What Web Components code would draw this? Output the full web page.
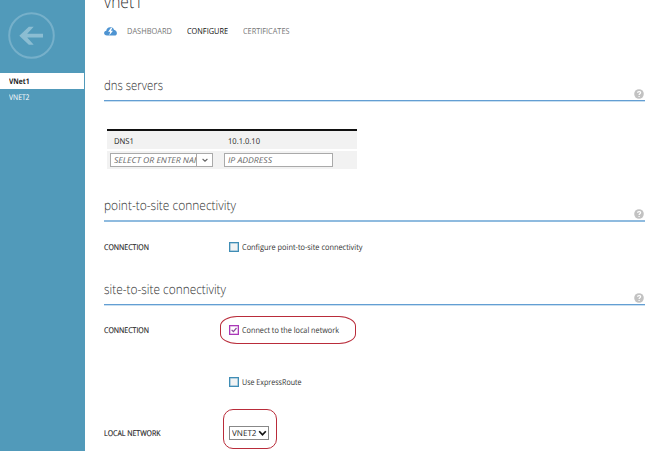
<!DOCTYPE html>
<html lang="en"><head><meta charset="utf-8"><title>vnet1</title>
<style>html,body{margin:0;height:451px;overflow:hidden;background:#fff;font-family:"Open Sans","Noto Sans",sans-serif}</style></head>
<body><portal-app></portal-app>
<script>
const define=(name,html,after)=>{
  const t=document.createElement('template');t.innerHTML=html;
  customElements.define(name,class extends HTMLElement{
    connectedCallback(){
      if(this.shadowRoot)return;
      this.attachShadow({mode:'open'}).append(t.content.cloneNode(true));
      if(after)after(this,this.shadowRoot);
    }
  });
};
// Text run condensed or widened to fill the width given in "w".
define('fit-text','<style>:host{display:inline-block;white-space:pre;flex:none;line-height:1.2;text-rendering:geometricPrecision}span{display:inline-block;transform-origin:0 50%}</style><span><slot></slot></span>',(el,r)=>{
  const s=r.querySelector('span'),w=+el.getAttribute('w');
  s.style.transform='scaleX('+w/s.getBoundingClientRect().width+')';
  el.style.width=w+'px';
});
define('back-button',`<style>:host{display:block;height:73px;padding:12px 0 0 8px;box-sizing:border-box}svg{display:block}</style>
<svg width="47" height="48" viewBox="0 0 47 48" fill="none"><circle cx="23.5" cy="23.5" r="22.3" stroke="#76b0ca" stroke-width="2"/><path d="M35 21.8V25.6H19.2L25.7 32.7H20.8L11.3 23.7L20.8 14.7H25.7L19.2 21.8Z" fill="#8bbdd2"/></svg>`);
define('side-item',`<style>:host{display:flex;align-items:center;box-sizing:border-box;height:16px;padding:3px 0 0 9px;font-size:7.8px;color:#fff}:host([active]){background:#fff;color:#222;font-weight:700;margin-right:1px}</style><slot></slot>`);
define('side-bar',`<style>:host{display:block;background:#519aba;height:451px}</style><back-button></back-button><side-item active><fit-text w="20.5">VNet1</fit-text></side-item><side-item><fit-text w="20.5">VNET2</fit-text></side-item>`);
define('cloud-icon',`<style>:host{display:block;width:13px;height:9px;flex:none}svg{display:block}</style>
<svg width="13" height="9" viewBox="0 0 13 9"><path d="M3 8.5C1.2 8.5.1 7.5.1 6.1.1 4.8 1 3.8 2.3 3.7 2.5 1.7 4 .3 6.1.3 8-.2 9.7 1 9.9 2.8 11.7 3.2 12.9 4.5 12.9 6.2 12.9 7.6 11.9 8.5 10.6 8.5Z" fill="#4e94d2"/><path d="M7 .7L4.1 4.7H6.2L5.2 8.4L9 3.7H6.9L8.4.7Z" fill="#fff"/></svg>`);
define('tab-bar',`<style>:host{display:flex;align-items:center;height:14px;font-size:8.4px;color:#777}fit-text{padding-top:3px}.on{color:#111}.a{margin-left:10px}.b{margin-left:15px}</style>
<cloud-icon></cloud-icon><fit-text class="a" w="45">DASHBOARD</fit-text><fit-text class="b on" w="41">CONFIGURE</fit-text><fit-text class="b" w="46.5">CERTIFICATES</fit-text>`);
define('help-icon',`<style>:host{display:block;width:10px;height:10px}svg{display:block}</style><svg width="10" height="10" viewBox="0 0 10 10"><circle cx="5" cy="5" r="4.8" fill="#c2c2c2"/><path d="M3.5 3.8C3.5 2.2 6.6 2.1 6.6 3.8 6.6 4.8 5.1 4.8 5.1 6" fill="none" stroke="#fff" stroke-width="1.2"/><path d="M4.5 6.9h1.2v1.2H4.5z" fill="#fff"/></svg>`);
define('section-head',`<style>:host{display:flex;justify-content:space-between;align-items:flex-start;box-sizing:border-box;width:541px;height:24px;padding-top:1px;border-bottom:1px solid #639ed3;color:#303030;font-size:13.3px;font-weight:300;box-shadow:0 1px 0 #c9dff0}:host([thick]){border-bottom:2px solid #8fbbdf;box-shadow:none;height:25px}help-icon{margin:11px 1px 0 0}</style><slot></slot><help-icon></help-icon>`);
define('dns-table',`<style>
:host{display:grid;grid-template-rows:18px 18px;row-gap:2px;width:250px;margin-left:3px;border-top:2px solid #111;font-size:8.1px;color:#222}
.row{display:grid;grid-template-columns:117px 133px;align-items:center;background:#f2f2f2}.c{padding:3px 0 0 7px}.d{padding:3px 0 0 4px}
.in{box-sizing:border-box;display:flex;align-items:center;height:14px;border:1px solid #aaa;background:#fff;font-style:italic;color:#666;padding-left:3px;overflow:hidden}.in fit-text{padding-top:1px}
.one{width:103px;margin-left:3px}.two{width:109px}.clip{width:82px;overflow:hidden;flex:none;display:flex}.arrow{border-left:1px solid #aaa;width:15px;height:12px;display:grid;place-items:center;flex:none}</style>
<div class="row"><fit-text class="c" w="20">DNS1</fit-text><fit-text class="d" w="32">10.1.0.10</fit-text></div>
<div class="row"><div class="in one"><span class="clip"><fit-text w="87">SELECT OR ENTER NAM</fit-text></span><span class="arrow"><svg width="6" height="5"><path d="M.6 1L3 3.2L5.4 1" fill="none" stroke="#666" stroke-width="1.1"/></svg></span></div><div class="in two"><fit-text w="44">IP ADDRESS</fit-text></div></div>`);
define('check-box',`<style>:host{display:flex;align-items:center;gap:3.2px;font-size:8.2px;color:#333}i{box-sizing:border-box;width:10px;height:10px;border:1px solid #3f8db5;box-shadow:inset 0 0 0 .5px #75aecb;background:#f1f3f4}svg{display:none}:host([checked]) i{border-color:#aa38b8;box-shadow:inset 0 0 0 .5px #cb82d2;background:#fff}:host([checked]) svg{display:block}</style><i><svg width="8" height="8"><path d="M1.6 3.8L3.4 5.7L6.5 2" fill="none" stroke="#8d4b9b" stroke-width="1.2"/></svg></i><slot></slot>`);
define('drop-down',`<style>:host{box-sizing:border-box;display:flex;align-items:center;justify-content:space-between;width:40px;height:14px;border:1px solid #888;padding:0 1px 0 2px;font-size:8.2px;color:#222}</style><slot></slot><svg width="9" height="7"><path d="M1.2 1.2L4.5 4.8L7.8 1.2" fill="none" stroke="#111" stroke-width="1.7"/></svg>`);
define('form-row',`<style>:host{display:grid;grid-template-columns:125px auto;justify-content:start;align-items:center;height:14px;font-size:8px;color:#222}.l{-webkit-text-stroke:.15px #222;display:flex}</style><span class="l"><slot name="label"></slot></span><slot></slot>`);
// Hand-drawn highlight ring laid over the form.
define('red-ring',`<style>:host{position:absolute;box-sizing:border-box;border:1px solid #b92c3a;pointer-events:none}</style>`);
define('portal-app',`<style>
:host{display:grid;grid-template-columns:85px 1fr;height:451px;overflow:hidden;position:relative}
main{padding-left:19px;min-width:0;overflow:hidden}
form-row fit-text{padding-top:2px}
.title{display:flex;height:24px;font-size:18.5px;font-weight:300;color:#333}.title fit-text{margin-top:-9px}
.h1{margin-top:39px}dns-table{margin-top:28px}.h2{margin-top:28px}.h3{margin-top:27px}
.r1{margin-top:18px}.r2{margin-top:18px}.r3{margin-top:38px}.r4{margin-top:37px}
.ring1{left:220px;top:316px;width:136px;height:28px;border-radius:17px/10px}
.ring2{left:223px;top:409px;width:54px;height:40px;border-radius:10px}
</style>
<side-bar></side-bar>
<main><div class="title"><fit-text w="39">vnet1</fit-text></div><tab-bar></tab-bar>
<section-head class="h1"><fit-text w="59">dns servers</fit-text></section-head><dns-table></dns-table>
<section-head class="h2" thick><fit-text w="132">point-to-site connectivity</fit-text></section-head>
<form-row class="r1"><fit-text slot="label" w="45">CONNECTION</fit-text><check-box><fit-text w="120.5">Configure point-to-site connectivity</fit-text></check-box></form-row>
<section-head class="h3"><fit-text w="122">site-to-site connectivity</fit-text></section-head>
<form-row class="r2"><fit-text slot="label" w="45">CONNECTION</fit-text><check-box checked><fit-text w="97">Connect to the local network</fit-text></check-box></form-row>
<form-row class="r3"><check-box style="grid-column:2"><fit-text w="59.5">Use ExpressRoute</fit-text></check-box></form-row>
<form-row class="r4"><fit-text slot="label" w="56.5">LOCAL NETWORK</fit-text><drop-down><fit-text w="24.5">VNET2</fit-text></drop-down></form-row>
</main><red-ring class="ring1"></red-ring><red-ring class="ring2"></red-ring>`);
</script></body></html>
